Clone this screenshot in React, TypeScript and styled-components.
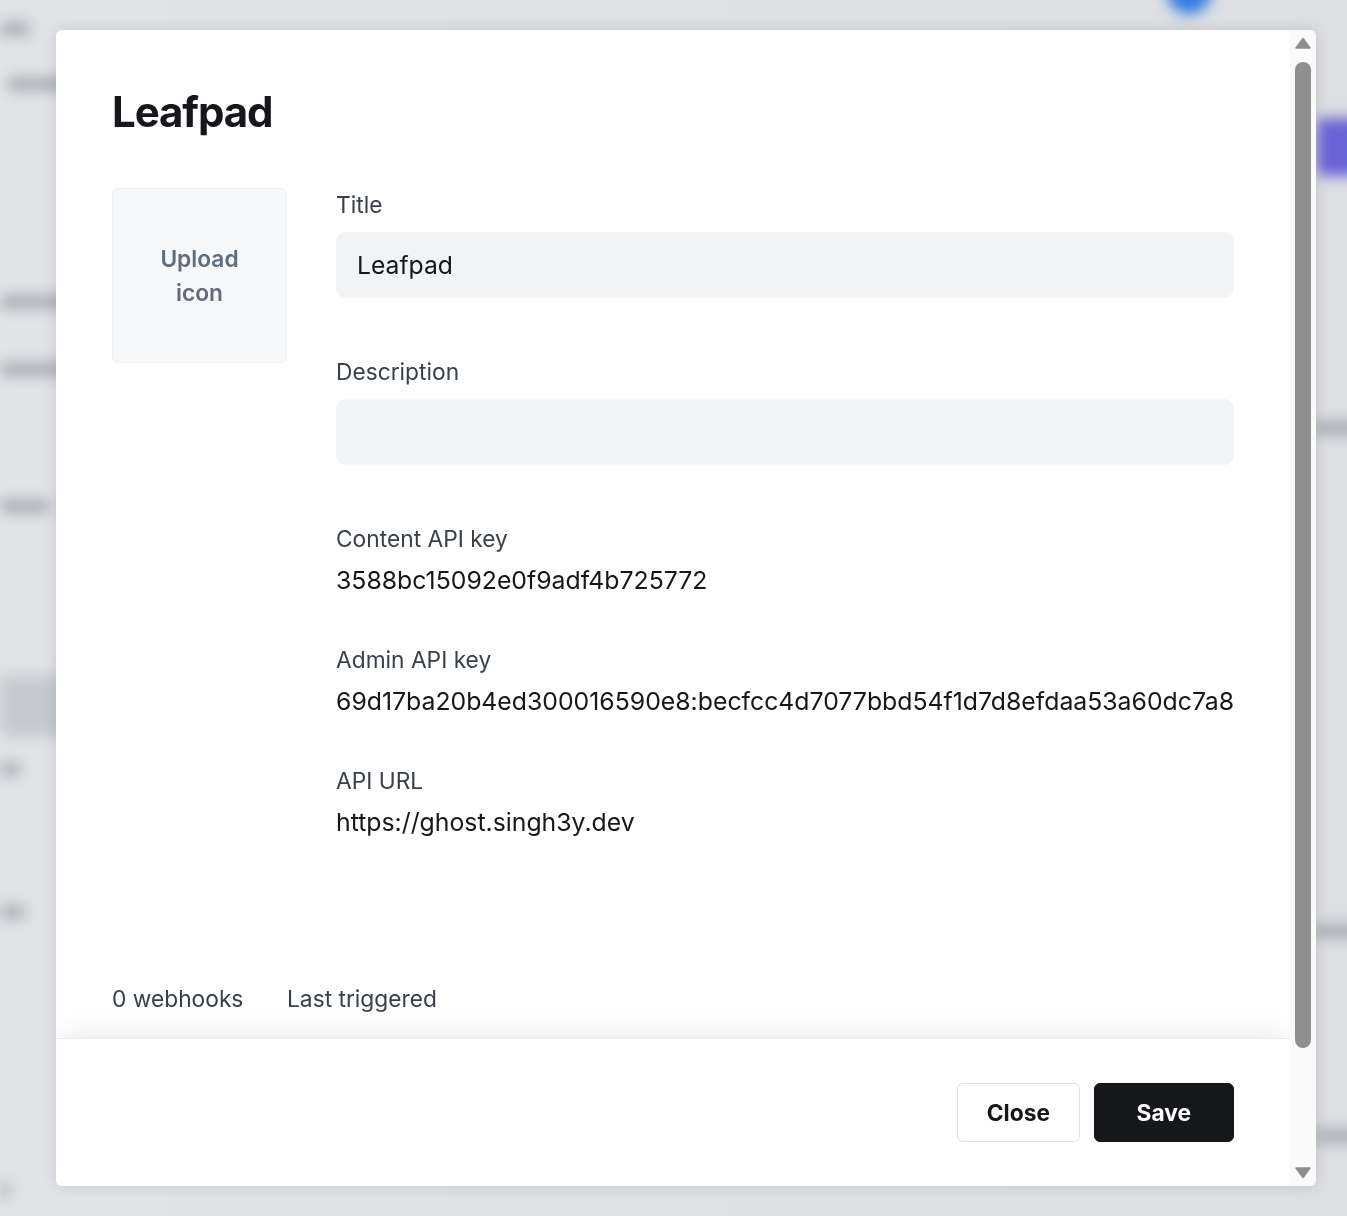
import styled, { createGlobalStyle } from 'styled-components'

const GlobalStyle = createGlobalStyle`
  * {
    box-sizing: border-box;
  }
  html,
  body {
    margin: 0;
    height: 100%;
  }
  body {
    font-family: Inter, 'Noto Sans', 'Liberation Sans', sans-serif;
    color: #15171a;
    background: #e0e1e4;
    overflow: hidden;
  }
`

type Field = { kind: 'input' | 'text'; label: string; value: string }

const fields: Field[] = [
  { kind: 'input', label: 'Title', value: 'Leafpad' },
  { kind: 'input', label: 'Description', value: '' },
  { kind: 'text', label: 'Content API key', value: '3588bc15092e0f9adf4b725772' },
  {
    kind: 'text',
    label: 'Admin API key',
    value: '69d17ba20b4ed300016590e8:becfcc4d7077bbd54f1d7d8efdaa53a60dc7a8',
  },
  { kind: 'text', label: 'API URL', value: 'https://ghost.singh3y.dev' },
]

// blurred page behind the modal
const leftBars = [
  { gap: 22, left: 0, width: 30 },
  { gap: 41, left: 8, width: 70 },
  { gap: 204, left: 0, width: 70 },
  { gap: 53, left: 0, width: 70 },
  { gap: 123, left: 0, width: 50 },
]

const App = () => {
  return (
    <>
      <GlobalStyle />
      <Backdrop>
        <Rail>
          {leftBars.map((b, i) => (
            <Bar key={i} $gap={b.gap} $left={b.left} $width={b.width} />
          ))}
          <ActiveItem />
          <Bar $gap={25} $left={0} $width={20} />
          <Bar $gap={129} $left={0} $width={25} />
          <Bar $gap={264} $left={0} $width={10} />
        </Rail>
        <Rail $width={200}>
          <Avatar />
          <PublishButton>
            <Glyph />
          </PublishButton>
          <Bar $gap={245} $left={165} $width={80} />
          <Bar $gap={489} $left={165} $width={80} />
          <Bar $gap={191} $left={165} $width={80} />
        </Rail>
      </Backdrop>

      <Overlay>
        <Modal>
          <Content>
            <Body>
              <Heading>Leafpad</Heading>
              <FormGrid>
                <UploadBox>
                  Upload
                  <br />
                  icon
                </UploadBox>
                <Fields>
                  {fields.map((f) => (
                    <FieldGroup key={f.label} $hint={f.kind === 'input'}>
                      <Label>{f.label}</Label>
                      {f.kind === 'input' ? (
                        <TextInput defaultValue={f.value} />
                      ) : (
                        <Value>{f.value}</Value>
                      )}
                    </FieldGroup>
                  ))}
                </Fields>
              </FormGrid>

              <WebhookHead>
                <span>0 webhooks</span>
                <span>Last triggered</span>
              </WebhookHead>
            </Body>

            <Footer>
              <Button $padding={28.5}>Close</Button>
              <Button $padding={42} $primary>
                Save
              </Button>
            </Footer>
          </Content>

          <Scrollbar>
            <Arrow>
              <svg width="16" height="12" viewBox="0 0 16 12">
                <path d="M8 1.5 L15 11 L1 11 Z" fill="#8f8f8f" stroke="#8f8f8f" strokeWidth="1.5" strokeLinejoin="round" />
              </svg>
            </Arrow>
            <Track>
              <Thumb />
            </Track>
            <Arrow>
              <svg width="16" height="12" viewBox="0 0 16 12">
                <path d="M1 1 L15 1 L8 10.5 Z" fill="#8f8f8f" stroke="#8f8f8f" strokeWidth="1.5" strokeLinejoin="round" />
              </svg>
            </Arrow>
          </Scrollbar>
        </Modal>
      </Overlay>
    </>
  )
}

export default App

const Backdrop = styled.div`
  position: fixed;
  inset: -30px;
  padding: 0 30px;
  display: flex;
  justify-content: space-between;
  background: linear-gradient(90deg, #e2e3e6 0%, #dcdee1 100%);
  filter: blur(7px);
`

const Rail = styled.div<{ $width?: number }>`
  width: ${(p) => p.$width ?? 90}px;
  padding-top: 30px;
  display: flex;
  flex-direction: column;
`

const Bar = styled.div<{ $gap: number; $left: number; $width: number }>`
  margin-top: ${(p) => p.$gap}px;
  margin-left: ${(p) => p.$left}px;
  width: ${(p) => p.$width}px;
  height: 14px;
  border-radius: 4px;
  background: #a9aeb4;
`

const ActiveItem = styled.div`
  margin-top: 162px;
  height: 62px;
  background: #c6cace;
`

const Avatar = styled.div`
  margin: -30px 0 0 20px;
  width: 44px;
  height: 44px;
  border-radius: 50%;
  background: #2f7be0;
`

const PublishButton = styled.div`
  margin: 104px 0 0 170px;
  width: 90px;
  height: 58px;
  border-radius: 6px;
  background: linear-gradient(90deg, #6d5fd6, #4e7fdf);
  display: flex;
  align-items: center;
  padding-left: 156px;
`

const Glyph = styled.div`
  width: 14px;
  height: 26px;
  border-radius: 4px;
  background: #c9c9f2;
`

const Overlay = styled.div`
  position: fixed;
  inset: 0;
  display: flex;
  align-items: flex-start;
  padding: 30px 31px 30px 56px;
`

const Modal = styled.div`
  width: 1260px;
  height: 1156px;
  display: flex;
  background: #fff;
  border-radius: 6px;
  box-shadow: 0 0 14px rgba(0, 0, 0, 0.12);
  overflow: hidden;
`

const Content = styled.div`
  flex: 1;
  min-width: 0;
  display: flex;
  flex-direction: column;
  overflow: hidden;
`

const Body = styled.div`
  flex: 1;
  padding: 57px 56px 0;
`

const Heading = styled.h1`
  margin: 0;
  font-size: 42px;
  line-height: 50px;
  font-weight: 700;
  letter-spacing: -1.1px;
  color: #15171a;
`

const FormGrid = styled.div`
  margin-top: 51px;
  display: grid;
  grid-template-columns: 175px 1fr;
  column-gap: 49px;
  align-items: start;
`

const UploadBox = styled.div`
  height: 175px;
  display: flex;
  align-items: center;
  justify-content: center;
  text-align: center;
  background: #f7f8f9;
  border: 1px solid #f0f1f3;
  border-radius: 6px;
  color: #5f6e7f;
  font-size: 22.75px;
  line-height: 34px;
  font-weight: 600;
`

const Fields = styled.div`
  display: flex;
  flex-direction: column;
  gap: 48px;
`

const FieldGroup = styled.div<{ $hint: boolean }>`
  display: flex;
  flex-direction: column;
  padding-bottom: ${(p) => (p.$hint ? 9 : 0)}px;
`

const Label = styled.label`
  font-size: 22.75px;
  line-height: 34px;
  color: #394047;
  margin-bottom: 10px;
`

const TextInput = styled.input`
  height: 66px;
  padding: 0 21px;
  border: none;
  border-radius: 10px;
  background: #f2f3f4;
  font-family: inherit;
  font-size: 24.7px;
  color: #15171a;
  outline: none;
`

const Value = styled.div`
  margin-top: -1px;
  font-size: 24.8px;
  line-height: 30px;
  color: #15171a;
  white-space: nowrap;
`

const WebhookHead = styled.div`
  margin-top: 145px;
  display: grid;
  grid-template-columns: 175px 1fr;
  font-size: 22.75px;
  line-height: 34px;
  color: #394047;
`

const Footer = styled.div`
  flex: none;
  display: flex;
  justify-content: flex-end;
  gap: 14px;
  padding: 44px 56px;
  background: #fff;
  border-top: 1px solid #ececec;
  box-shadow: 0 -10px 24px -6px rgba(0, 0, 0, 0.09);
`

const Button = styled.button<{ $padding: number; $primary?: boolean }>`
  height: 59px;
  padding: 0 ${(p) => p.$padding}px;
  border-radius: 6px;
  border: 1px solid ${(p) => (p.$primary ? '#15171a' : '#dfe1e4')};
  background: ${(p) => (p.$primary ? '#15171a' : '#fff')};
  color: ${(p) => (p.$primary ? '#fff' : '#15171a')};
  font-family: inherit;
  font-size: 22.75px;
  font-weight: 700;
  cursor: pointer;
`

const Scrollbar = styled.div`
  flex: none;
  width: 26px;
  display: flex;
  flex-direction: column;
  background: #fafafa;
`

const Arrow = styled.div`
  height: 26px;
  display: flex;
  align-items: center;
  justify-content: center;
`

const Track = styled.div`
  flex: 1;
  padding: 6px 5px 0;
`

const Thumb = styled.div`
  height: 986px;
  border-radius: 8px;
  background: #8f8f8f;
`
